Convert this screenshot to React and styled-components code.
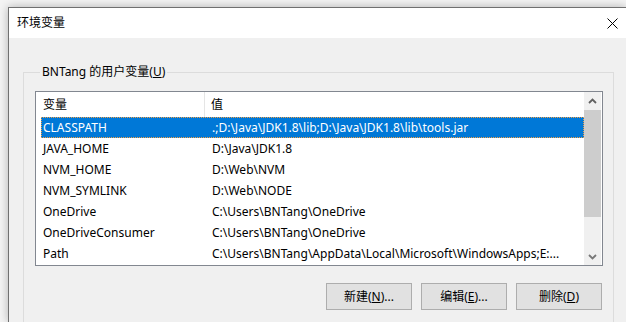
import React from 'react';
import styled, { createGlobalStyle } from 'styled-components';

const GlobalStyle = createGlobalStyle`
  html, body {
    margin: 0;
    padding: 0;
    height: 322px;
    overflow: hidden;
    background: #f4f4f4;
  }
  body {
    font-family: "Noto Sans", "Noto Sans CJK SC", sans-serif;
    font-size: 12px;
    color: #000;
  }
`;

const Window = styled.div`
  margin: 7px 0 0 8px;
  width: 618px;
  height: 315px;
  box-sizing: border-box;
  overflow: hidden;
  border-top: 1px solid #707070;
  border-left: 1px solid #707070;
  background: #f0f0f0;
  box-shadow: 0 0 9px rgba(0, 0, 0, 0.28);
  display: flex;
  flex-direction: column;
`;

const TitleBar = styled.div`
  height: 30px;
  flex: none;
  background: #fff;
  display: flex;
  align-items: center;
  padding-left: 8px;
  line-height: 16px;
`;

const Title = styled.span`
  flex: 1;
`;

const CloseButton = styled.span`
  display: flex;
  width: 11px;
  height: 11px;
  margin-right: 8px;
`;

const Group = styled.fieldset`
  margin: 26px 0 0 14px;
  width: 591px;
  box-sizing: border-box;
  border: 1px solid #dcdcdc;
  padding: 11px 10px 30px 11px;
  min-width: 0;
`;

const Legend = styled.legend`
  margin-left: 5px;
  padding: 0 2px;
  line-height: 16px;
`;

const Key = styled.span`
  text-decoration: underline;
  text-underline-offset: 1px;
`;

const List = styled.div`
  height: 175px;
  box-sizing: border-box;
  border: 1px solid #828790;
  background: #fff;
  display: flex;
  overflow: hidden;
`;

const ListBody = styled.div`
  flex: 1;
  display: flex;
  flex-direction: column;
  min-width: 0;
`;

const Header = styled.div`
  display: grid;
  grid-template-columns: 169px 1fr;
  height: 25px;
  flex: none;
  line-height: 16px;
`;

const HeaderCell = styled.div`
  display: flex;
  align-items: center;
  padding-left: ${p => p.$pad}px;
  border-right: ${p => (p.$divider ? '1px solid #e5e5e5' : 'none')};
`;

const Row = styled.div`
  display: grid;
  grid-template-columns: 164px 1fr;
  height: 21px;
  margin-left: 5px;
  box-sizing: border-box;
  align-items: center;
  line-height: 16px;
  white-space: nowrap;
  background: ${p => (p.$selected ? '#0078d7' : 'transparent')};
  color: ${p => (p.$selected ? '#fff' : '#000')};
  border: 1px dotted ${p => (p.$selected ? '#f0a048' : 'transparent')};
`;

const Cell = styled.div`
  padding-left: ${p => p.$pad}px;
  overflow: hidden;
`;

const ScrollBar = styled.div`
  width: 17px;
  margin-right: 1px;
  flex: none;
  background: #f0f0f0;
  display: flex;
  flex-direction: column;
`;

const Arrow = styled.div`
  height: 17px;
  flex: none;
  display: flex;
  align-items: center;
  justify-content: center;
`;

const Track = styled.div`
  flex: 1;
  display: flex;
  flex-direction: column;
`;

const Thumb = styled.div`
  height: 107px;
  margin-top: 1px;
  background: #cdcdcd;
`;

const Buttons = styled.div`
  display: flex;
  justify-content: flex-end;
  gap: 9px;
  margin-top: 17px;
  margin-right: 1px;
`;

const Button = styled.button`
  width: 86px;
  height: 27px;
  border: 1px solid #adadad;
  background: #e1e1e1;
  font-family: inherit;
  font-size: 12px;
  line-height: 16px;
  color: #000;
  padding: 0;
`;

const rows = [
  ['CLASSPATH', '.;D:\\Java\\JDK1.8\\lib;D:\\Java\\JDK1.8\\lib\\tools.jar'],
  ['JAVA_HOME', 'D:\\Java\\JDK1.8'],
  ['NVM_HOME', 'D:\\Web\\NVM'],
  ['NVM_SYMLINK', 'D:\\Web\\NODE'],
  ['OneDrive', 'C:\\Users\\BNTang\\OneDrive'],
  ['OneDriveConsumer', 'C:\\Users\\BNTang\\OneDrive'],
  ['Path', 'C:\\Users\\BNTang\\AppData\\Local\\Microsoft\\WindowsApps;E:...'],
];

const Chevron = ({ up, color }) => (
  <svg width="9" height="6" viewBox="0 0 9 6">
    <path
      d={up ? 'M1 5 L4.5 1.5 L8 5' : 'M1 1 L4.5 4.5 L8 1'}
      fill="none"
      stroke={color}
      strokeWidth="1.8"
    />
  </svg>
);

const App = () => {
  return (
    <>
      <GlobalStyle />
      <Window>
        <TitleBar>
          <Title>环境变量</Title>
          <CloseButton>
            <svg width="11" height="11" viewBox="0 0 11 11">
              <path d="M0.5 0.5 L10.5 10.5 M10.5 0.5 L0.5 10.5" stroke="#000" strokeWidth="1" />
            </svg>
          </CloseButton>
        </TitleBar>
        <Group>
          <Legend>
            BNTang 的用户变量(<Key>U</Key>)
          </Legend>
          <List>
            <ListBody>
              <Header>
                <HeaderCell $pad={7} $divider>变量</HeaderCell>
                <HeaderCell $pad={6}>值</HeaderCell>
              </Header>
              {rows.map(([name, value], i) => (
                <Row key={name} $selected={i === 0}>
                  <Cell $pad={1}>{name}</Cell>
                  <Cell $pad={6}>{value}</Cell>
                </Row>
              ))}
            </ListBody>
            <ScrollBar>
              <Arrow>
                <Chevron up color="#606060" />
              </Arrow>
              <Track>
                <Thumb />
              </Track>
              <Arrow>
                <Chevron color="#787878" />
              </Arrow>
            </ScrollBar>
          </List>
          <Buttons>
            <Button>
              新建(<Key>N</Key>)...
            </Button>
            <Button>
              编辑(<Key>E</Key>)...
            </Button>
            <Button>
              删除(<Key>D</Key>)
            </Button>
          </Buttons>
        </Group>
      </Window>
    </>
  );
};

export default App;
